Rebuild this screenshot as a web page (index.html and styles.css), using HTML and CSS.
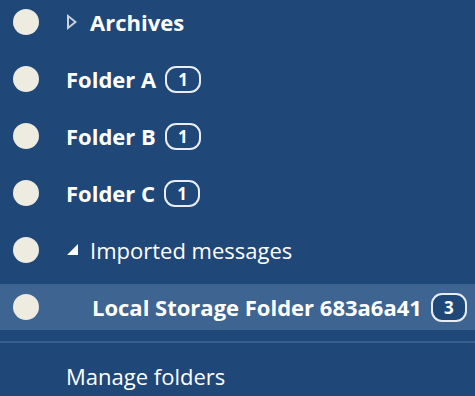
FILE: index.html
```html
<!DOCTYPE html>
<html lang="en">
<head>
    <meta charset="UTF-8">
    <meta name="viewport" content="width=device-width, initial-scale=1.0">
    <title>Folders</title>
    <link rel="stylesheet" href="styles.css">
</head>
<body>
    <ul class="folder-list">
        <li class="folder-row">
            <span class="dot"></span>
            <span class="twisty closed"></span>
            <span class="name bold">Archives</span>
        </li>
        <li class="folder-row">
            <span class="dot"></span>
            <span class="name bold">Folder A</span>
            <span class="badge">1</span>
        </li>
        <li class="folder-row">
            <span class="dot"></span>
            <span class="name bold">Folder B</span>
            <span class="badge">1</span>
        </li>
        <li class="folder-row">
            <span class="dot"></span>
            <span class="name bold">Folder C</span>
            <span class="badge">1</span>
        </li>
        <li class="folder-row">
            <span class="dot"></span>
            <span class="twisty open"></span>
            <span class="name">Imported messages</span>
        </li>
        <li class="folder-row selected child">
            <span class="dot"></span>
            <span class="name bold">Local Storage Folder 683a6a41</span>
            <span class="badge">3</span>
        </li>
    </ul>
    <div class="separator"></div>
    <div class="manage">Manage folders</div>
</body>
</html>
```

FILE: styles.css
```css
* {
    margin: 0;
    padding: 0;
    box-sizing: border-box;
}
body, html {
    height: 100%;
    font-family: "Open Sans", "Noto Sans", sans-serif;
    background-color: #1f4778;
    color: #ffffff;
    overflow: hidden;
}
.folder-list {
    list-style: none;
    display: flex;
    flex-direction: column;
    gap: 11px;
    margin-top: -1px;
}
.folder-row {
    display: flex;
    align-items: center;
    height: 46px;
    padding-left: 13px;
    font-size: 22px;
    white-space: nowrap;
}
.folder-row.selected {
    background-color: #3e6491;
}
.dot {
    width: 26px;
    height: 26px;
    border-radius: 50%;
    background-color: #eeebe0;
    margin-right: 27px;
    flex-shrink: 0;
}
.child .dot {
    margin-right: 53px;
}
.twisty {
    width: 24px;
    height: 20px;
    position: relative;
    flex-shrink: 0;
}
.twisty.closed::before {
    content: "";
    position: absolute;
    left: 1px;
    top: 2px;
    width: 0;
    height: 0;
    border-top: 8px solid transparent;
    border-bottom: 8px solid transparent;
    border-left: 10px solid #c9d3e0;
}
.twisty.closed::after {
    content: "";
    position: absolute;
    left: 2.5px;
    top: 5.5px;
    width: 0;
    height: 0;
    border-top: 4.5px solid transparent;
    border-bottom: 4.5px solid transparent;
    border-left: 5.5px solid #1f4778;
}
.twisty.open::before {
    content: "";
    position: absolute;
    left: 1px;
    top: 4px;
    width: 0;
    height: 0;
    border-left: 11px solid transparent;
    border-bottom: 11px solid #ffffff;
}
.bold {
    font-weight: 700;
}
.badge {
    margin-left: 9px;
    min-width: 36px;
    height: 27px;
    padding: 0 9px;
    border: 2px solid #e8edf3;
    border-radius: 11px;
    display: flex;
    align-items: center;
    justify-content: center;
    font-size: 17px;
    font-weight: 700;
}
.selected .badge {
    background-color: #1f4778;
    height: 29px;
}
.separator {
    margin-top: 11px;
    height: 2px;
    background-color: #3a5f8d;
}
.manage {
    padding: 18px 0 0 66px;
    font-size: 22px;
}
```
